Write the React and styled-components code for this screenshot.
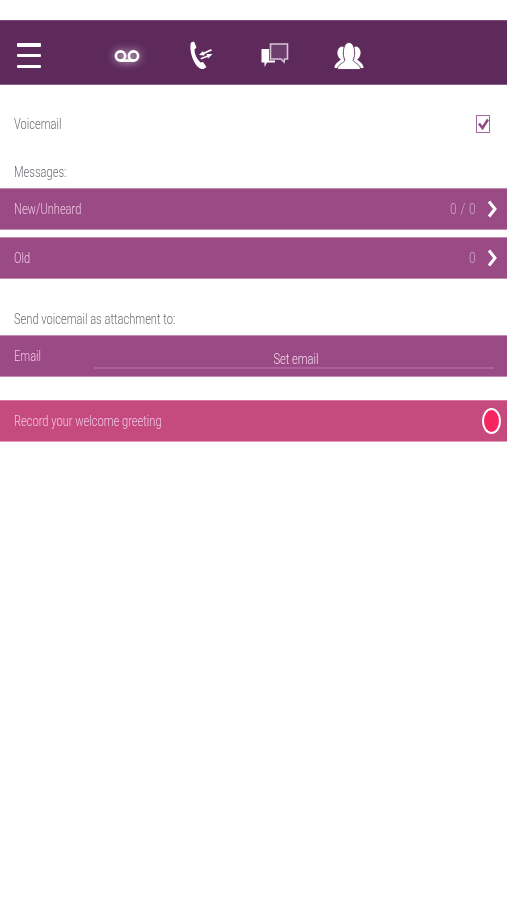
import React from 'react';
import styled, { createGlobalStyle } from 'styled-components';

const GlobalStyle = createGlobalStyle`
  html, body {
    margin: 0;
    padding: 0;
    background: #fff;
  }
  body {
    font-family: Roboto, "Liberation Sans", sans-serif;
    font-weight: 300;
  }
`;

const Page = styled.div`
  width: 507px;
  height: 900px;
  padding-top: 20px;
  box-sizing: border-box;
  background: #fff;
  overflow: hidden;
`;

const Header = styled.header`
  height: 65px;
  box-sizing: border-box;
  background: #5e2a5c;
  border-top: 1px solid #7d4d7b;
  border-bottom: 1px solid #8d5f8b;
  display: flex;
  align-items: center;
  padding: 6px 0 0 17px;
`;

const Burger = styled.button`
  width: 24px;
  height: 25px;
  padding: 0;
  border: 0;
  background: none;
  display: flex;
  flex-direction: column;
  justify-content: space-between;
  margin-right: 70px;

  span {
    display: block;
    height: 3.5px;
    border-radius: 1px;
    background: #fff;
  }
`;

const Tabs = styled.nav`
  display: flex;
  align-items: center;
  gap: 42px;
`;

const Tab = styled.div`
  width: 32px;
  height: 34px;
  display: flex;
  align-items: center;
  justify-content: center;
  filter: ${(p) => (p.$active ? 'drop-shadow(0 0 4px rgba(255,255,255,.8))' : 'none')};
`;

const Label = styled.div`
  font-size: 11.1px;
  color: #6e6a72;
  padding-left: 14px;
  transform: scaleY(1.3);
  transform-origin: left center;
`;

const VoicemailRow = styled.div`
  height: 78px;
  display: flex;
  align-items: center;
  justify-content: space-between;
  padding: 0 17px 0 0;
`;

const CheckBox = styled.div`
  width: 12px;
  height: 16px;
  margin-top: -1px;
  border: 1.5px solid #a0689e;
  display: flex;
  align-items: center;
  justify-content: center;
`;

const MessagesLabel = styled(Label)`
  height: 25px;
  line-height: 22px;
`;

const AttachLabel = styled(Label)`
  margin-top: 31px;
  height: 25px;
  line-height: 22px;
`;

const Row = styled.div`
  height: 42px;
  box-sizing: border-box;
  background: ${(p) => (p.$pink ? '#c54b7e' : '#9a4a84')};
  border-top: 1px solid ${(p) => (p.$pink ? '#d9789f' : '#c08cb1')};
  border-bottom: 1px solid ${(p) => (p.$pink ? '#e59ab9' : '#c08cb1')};
  margin-top: ${(p) => p.$gap || 0}px;
  display: flex;
  align-items: center;
  padding: 0 10px 0 14px;
  color: #f1c6e4;
  font-size: 11.1px;
`;

const RowText = styled.span`
  transform: scaleY(1.3);
`;

const Count = styled.span`
  margin-left: auto;
  margin-right: 11px;
  color: #d3a8c9;
  font-size: 12px;
  letter-spacing: 0.4px;
  transform: scaleY(1.2);
  margin-top: -1px;
`;

const EmailField = styled.div`
  width: 400px;
  height: 25px;
  margin: 1px 3px 0 auto;
  border-bottom: 2px solid #ad609a;
  box-sizing: border-box;
  padding-left: 4px;
  text-align: center;
  line-height: 31px;
  color: #f6dcee;
  font-size: 11.1px;

  span {
    display: inline-block;
    transform: scaleY(1.25);
  }
`;

const RecordDot = styled.div`
  width: 15px;
  height: 22px;
  margin-left: auto;
  margin-right: -4px;
  border-radius: 50%;
  border: 2.5px solid #fff;
  background: #f5265f;
`;

const Chevron = () => (
  <svg width="10" height="18" viewBox="0 0 10 18">
    <path d="M2 1.5 L8 9 L2 16.5" fill="none" stroke="#fff" strokeWidth="3" />
  </svg>
);

const VoicemailIcon = () => (
  <svg width="26" height="14" viewBox="0 0 26 14">
    <circle cx="6.5" cy="7" r="4.6" fill="none" stroke="#fff" strokeWidth="2.6" />
    <circle cx="19.5" cy="7" r="4.6" fill="none" stroke="#fff" strokeWidth="2.6" />
    <path d="M6.5 11.6 H19.5" stroke="#fff" strokeWidth="2.6" />
  </svg>
);

const CallIcon = () => (
  <svg width="24" height="29" viewBox="0 0 24 29">
    <path
      d="M2 1.5 L5 0.5 L7.5 6.5 L5.5 8.5 C5.5 13 8 18 11.5 21.5 L14 21 L17.5 26 L14.5 28 C11 28.5 7 25 4.5 19.5 C2 14 0.5 6 2 1.5 Z"
      fill="#fff"
    />
    <path d="M10 14 L14 10 L14.5 11.5 L22 8 L23 9.5 L15.5 13 L15.5 14.5 Z" fill="#fff" />
    <path d="M23.5 13 L19 17.5 L18.5 16 L12 18.5 L11.5 17 L18 14.5 L17.5 13 Z" fill="#fff" />
  </svg>
);

const ChatIcon = () => (
  <svg width="28" height="25" viewBox="0 0 28 25">
    <path d="M9.5 1 H26.5 V16 H23.5 L23 19 L20 16 H9.5 Z" fill="#6d3d6c" stroke="#d9c3d8" strokeWidth="1.6" />
    <path d="M0.5 6 H8 V17.5 H14 V19.5 H6 L3.5 24 L3.5 19.5 H0.5 Z" fill="#fff" />
  </svg>
);

const PeopleIcon = () => (
  <svg width="30" height="28" viewBox="0 0 30 28">
    <ellipse cx="8" cy="11" rx="4.6" ry="6.5" fill="#fff" />
    <ellipse cx="22" cy="11" rx="4.6" ry="6.5" fill="#fff" />
    <path d="M0.5 26 C0.5 21 5 20 7 17 H23 C25 20 29.5 21 29.5 26 Z" fill="#fff" />
    <path
      d="M3.5 27.5 C3.5 22.5 8 22 11 18.5 C9.5 15 9 12 9.5 8.5 C10 3 12.5 0.5 15 0.5 C17.5 0.5 20 3 20.5 8.5 C21 12 20.5 15 19 18.5 C22 22 26.5 22.5 26.5 27.5 Z"
      fill="#fff"
      stroke="#5e2a5c"
      strokeWidth="0.9"
    />
  </svg>
);

export default function App() {
  return (
    <Page>
      <GlobalStyle />
      <Header>
        <Burger aria-label="Menu">
          <span />
          <span />
          <span />
        </Burger>
        <Tabs>
          <Tab $active><VoicemailIcon /></Tab>
          <Tab><CallIcon /></Tab>
          <Tab><ChatIcon /></Tab>
          <Tab><PeopleIcon /></Tab>
        </Tabs>
      </Header>

      <VoicemailRow>
        <Label>Voicemail</Label>
        <CheckBox>
          <svg width="11" height="12" viewBox="0 0 11 12">
            <path d="M1 5.5 L4.5 10 L10 1.5" fill="none" stroke="#8f4a82" strokeWidth="2.6" />
          </svg>
        </CheckBox>
      </VoicemailRow>

      <MessagesLabel>Messages:</MessagesLabel>
      <Row>
        <RowText>New/Unheard</RowText>
        <Count>0 / 0</Count>
        <Chevron />
      </Row>
      <Row $gap={7}>
        <RowText>Old</RowText>
        <Count>0</Count>
        <Chevron />
      </Row>

      <AttachLabel>Send voicemail as attachment to:</AttachLabel>
      <Row>
        <RowText>Email</RowText>
        <EmailField><span>Set email</span></EmailField>
      </Row>
      <Row $pink $gap={23}>
        <RowText>Record your welcome greeting</RowText>
        <RecordDot />
      </Row>
    </Page>
  );
}
